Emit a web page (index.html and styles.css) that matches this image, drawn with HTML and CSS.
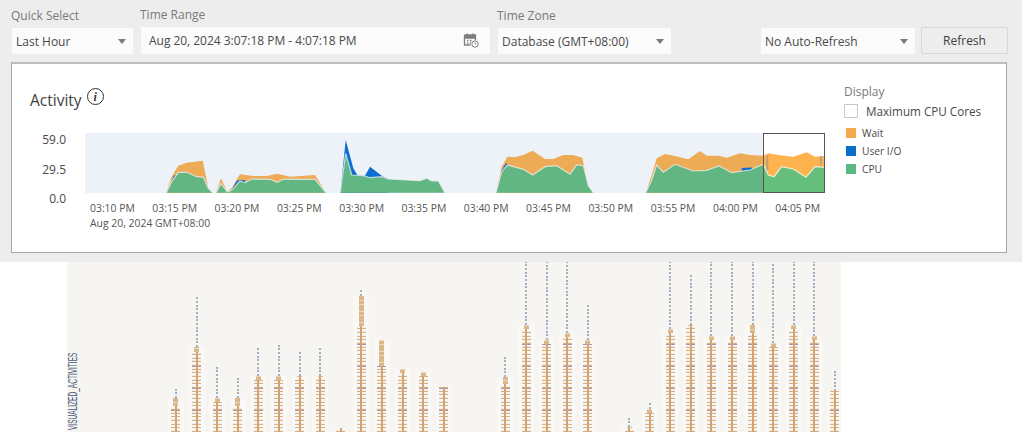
FILE: index.html
```html
<!DOCTYPE html>
<html lang="en">
<head>
<meta charset="utf-8">
<title>Activity</title>
<link rel="stylesheet" href="styles.css">
</head>
<body>
<div class="top">
<header class="toolbar">
  <div class="field f-quick"><label>Quick Select</label><div class="select">Last Hour<i class="caret"></i></div></div>
  <div class="field f-range"><label>Time Range</label><div class="select range">Aug 20, 2024 3:07:18 PM - 4:07:18 PM
    <svg class="cal" viewBox="0 0 16 16" width="16" height="16"><path d="M1.500 3h11v5M1.500 3v10h6M1.500 6h11M4 1.500v3M10 1.500v3M4 8.500h1.500M7 8.500h1.500M4 11h1.500M7 11h1" fill="none" stroke="#7d7d7d" stroke-width="1.300"/><path d="M1.500 3h11v3h-11z" fill="#7d7d7d"/><circle cx="12" cy="12" r="3.200" fill="#fff" stroke="#7d7d7d"/><path d="M12 10.200V12h1.500" fill="none" stroke="#7d7d7d" stroke-width=".8"/></svg>
  </div></div>
  <div class="field f-zone"><label>Time Zone</label><div class="select">Database (GMT+08:00)<i class="caret"></i></div></div>
  <div class="field f-auto"><div class="select">No Auto-Refresh<i class="caret"></i></div></div>
  <button class="refresh" type="button">Refresh</button>
</header>

<section class="card">
  <div class="chart">
    <h2 class="title">Activity <span class="info">i</span></h2>
    <div class="chart-row">
      <div class="y-axis"><span>59.0</span><span>29.5</span><span>0.0</span></div>
      <div class="plot-col">
        <svg class="plot" viewBox="85 133 740 60" width="740" height="60">
          <defs>
            <path id="orange" d="M166.300 192.700L171.700 176.700L178.300 165.700L186.700 162.700L202.700 160.700L208.300 188L212.700 192.700M216 192.700L221 178.300L227.300 191.700L231.700 188L240 174.300L253.300 176L266.700 176L277.300 173.700L290 176.700L315 175L326 192.700M496 192.700L501.700 166.700L507.300 156.700L515 157.300L523.300 155L532.700 150.700L545 159L553.300 159L563.300 155L573.300 155L582.300 157.700L588.300 185.700L593.300 192.700M645.700 192.700L651.700 175L656.700 158.300L665 154L675 156L688.300 159.300L700 151L706.700 155.700L718.300 155.700L726.700 157.700L740 153.300L750 155L763.300 155.700L768.300 153.300L778.300 155L793.300 156.700L806.700 152.300L815 156.700L825 156L825 192.700"/>
            <path id="blue" d="M340.300 192.700L345.700 140L353.300 168.300L357.300 175L365 175.700L370 166.700L381.700 175.700L388.300 179L388.300 192.700M170.500 184L174 175.500L176 175L172 181M231 191L237 180.500L245 180L245 184L240 182M501 171.500L506 163L508 165L502 172.500M741.700 168L752 167.500L752.500 170L741.700 171"/>
            <path id="green" d="M166.300 192.700L171.700 181.700L178.300 172.300L186.700 172.300L196.700 176.700L203.300 177.300L208.300 188.300L212.700 192.700M216 192.700L221 183.700L227.300 191.700L231.700 190.300L240 181L245 182.700L251.700 179L270 179.300L277.300 182.300L283.300 179.300L315 179.300L326 192.700M340.300 192.700L345.700 153.300L351.700 175L363.300 175.700L370 177.700L381.700 176.700L388.300 179L420 180.700L426.700 178.300L431.700 181L438.300 181L445 192.700M496 192.700L501.700 171.700L507.300 165L523.300 169.300L532.700 175L545 166.700L556.700 165.700L570 174.300L576.700 165L583.300 165.700L588.300 185.700L593.300 192.700M645.700 192.700L651.700 180L656.700 165L663.300 172.300L675 164.300L693.300 171L706.700 170.300L719 166L731.700 172.700L750 170L763.300 164.300L768.300 175L774 176.700L781.700 166.700L793.300 169L806 177.300L815 166.700L825 167.300L825 192.700"/>
          </defs>
          <rect class="plot-bg" x="85" y="133" width="740" height="60"/>
          <use href="#orange" class="s-orange"/>
          <use href="#blue" class="s-blue"/>
          <use href="#green" class="s-green"/>
          <path class="handle" d="M767.300 155.700V170M821 156V165"/>
          <rect class="dim" x="85" y="133" width="678.500" height="60"/>
          <rect class="selection" x="763.500" y="133.500" width="61" height="59"/>
        </svg>
        <div class="x-axis">
          <span>03:10 PM</span><span>03:15 PM</span><span>03:20 PM</span><span>03:25 PM</span><span>03:30 PM</span><span>03:35 PM</span><span>03:40 PM</span><span>03:45 PM</span><span>03:50 PM</span><span>03:55 PM</span><span>04:00 PM</span><span>04:05 PM</span>
        </div>
        <div class="x-date">Aug 20, 2024 GMT+08:00</div>
      </div>
    </div>
  </div>
  <aside class="legend">
    <div class="legend-title">Display</div>
    <div class="check"><i class="box"></i>Maximum CPU Cores</div>
    <ul class="keys">
      <li><i class="swatch wait"></i>Wait</li>
      <li><i class="swatch io"></i>User I/O</li>
      <li><i class="swatch cpu"></i>CPU</li>
    </ul>
  </aside>
</section>
</div>

<section class="activities">
  <div class="axis-name">VISUALIZED_ACTIVITIES</div>
  <div class="columns">
    <div class="col"><i class="dots" style="height:10px"></i><div class="stack"><i class="beads" style="height:8px"></i><i class="ticks" style="height:26px"></i></div></div>
    <div class="col"><i class="dots" style="height:50px"></i><div class="stack"><i class="beads" style="height:5px"></i><i class="ticks" style="height:80px"></i></div></div>
    <div class="col"><i class="dots" style="height:31px"></i><div class="stack"><i class="beads" style="height:4px"></i><i class="ticks" style="height:30px"></i></div></div>
    <div class="col"><i class="dots" style="height:21px"></i><div class="stack"><i class="beads" style="height:8px"></i><i class="ticks" style="height:26px"></i></div></div>
    <div class="col"><i class="dots" style="height:28px"></i><div class="stack"><i class="beads" style="height:4px"></i><i class="ticks" style="height:52px"></i></div></div>
    <div class="col"><i class="dots" style="height:32px"></i><div class="stack"><i class="beads" style="height:4px"></i><i class="ticks" style="height:52px"></i></div></div>
    <div class="col"><i class="dots" style="height:24px"></i><div class="stack"><i class="beads" style="height:1px"></i><i class="ticks" style="height:55px"></i></div></div>
    <div class="col"><i class="dots" style="height:28px"></i><div class="stack"><i class="beads" style="height:1px"></i><i class="ticks" style="height:55px"></i></div></div>
    <div class="col"><div class="stack"><i class="ticks" style="height:4px"></i></div></div>
    <div class="col"><i class="dots" style="height:7px"></i><div class="stack"><i class="beads" style="height:30px"></i><i class="ticks" style="height:106px"></i></div></div>
    <div class="col"><div class="stack"><i class="beads" style="height:26px"></i><i class="ticks" style="height:66px"></i></div></div>
    <div class="col"><div class="stack"><i class="beads" style="height:4px"></i><i class="ticks" style="height:59px"></i></div></div>
    <div class="col"><div class="stack"><i class="beads" style="height:4px"></i><i class="ticks" style="height:56px"></i></div></div>
    <div class="col"><div class="stack"><i class="ticks" style="height:45px"></i></div></div>
    <div class="col"></div>
    <div class="col"></div>
    <div class="col"><i class="dots" style="height:22px"></i><div class="stack"><i class="beads" style="height:7px"></i><i class="ticks" style="height:48px"></i></div></div>
    <div class="col"><i class="dots" style="height:63px"></i><div class="stack"><i class="beads" style="height:4px"></i><i class="ticks" style="height:103px"></i></div></div>
    <div class="col"><i class="dots" style="height:78px"></i><div class="stack"><i class="beads" style="height:4px"></i><i class="ticks" style="height:88px"></i></div></div>
    <div class="col"><i class="dots" style="height:71px"></i><div class="stack"><i class="beads" style="height:4px"></i><i class="ticks" style="height:95px"></i></div></div>
    <div class="col"><i class="dots" style="height:36px"></i><div class="stack"><i class="beads" style="height:4px"></i><i class="ticks" style="height:88px"></i></div></div>
    <div class="col"></div>
    <div class="col"><i class="dots" style="height:10px"></i><div class="stack"><i class="beads" style="height:1px"></i><i class="ticks" style="height:4px"></i></div></div>
    <div class="col"><i class="dots" style="height:7px"></i><div class="stack"><i class="beads" style="height:4px"></i><i class="ticks" style="height:19px"></i></div></div>
    <div class="col"><i class="dots" style="height:67px"></i><div class="stack"><i class="beads" style="height:4px"></i><i class="ticks" style="height:99px"></i></div></div>
    <div class="col"><i class="dots" style="height:51px"></i><div class="stack"><i class="beads" style="height:1px"></i><i class="ticks" style="height:106px"></i></div></div>
    <div class="col"><i class="dots" style="height:74px"></i><div class="stack"><i class="beads" style="height:4px"></i><i class="ticks" style="height:92px"></i></div></div>
    <div class="col"><i class="dots" style="height:74px"></i><div class="stack"><i class="beads" style="height:4px"></i><i class="ticks" style="height:92px"></i></div></div>
    <div class="col"><i class="dots" style="height:63px"></i><div class="stack"><i class="beads" style="height:8px"></i><i class="ticks" style="height:99px"></i></div></div>
    <div class="col"><i class="dots" style="height:81px"></i><div class="stack"><i class="beads" style="height:4px"></i><i class="ticks" style="height:85px"></i></div></div>
    <div class="col"><i class="dots" style="height:63px"></i><div class="stack"><i class="beads" style="height:4px"></i><i class="ticks" style="height:103px"></i></div></div>
    <div class="col"><i class="dots" style="height:74px"></i><div class="stack"><i class="beads" style="height:4px"></i><i class="ticks" style="height:92px"></i></div></div>
    <div class="col"><i class="dots" style="height:21px"></i><div class="stack"><i class="ticks" style="height:41px"></i></div></div>
  </div>
</section>
</body>
</html>
```

FILE: styles.css
```css
* { box-sizing: border-box; }
html, body { margin: 0; height: 432px; overflow: hidden; background: #fff; }
body { font-family: "Open Sans", "Noto Sans", sans-serif; font-size: 12px; color: #4a4a4a; }

.top { height: 262px; background: #ededed; }
.toolbar { display: flex; align-items: flex-end; height: 62px; padding: 0 14px 8px 12px; }
.field { display: flex; flex-direction: column; margin-right: 8px; }
.field label { font-size: 12px; line-height: 18px; color: #7a7a7a; margin-left: -1px; height: 21px; }
.f-quick { width: 121px; }
.f-range { width: 349px; }
.f-zone { width: 173px; margin-right: 0; }
.f-auto { width: 154px; margin-left: 90px; margin-right: 6px; }
.select { position: relative; display: flex; align-items: center; height: 26px; padding-left: 4px; background: #fbfbfb; font-size: 12px; color: #4a4a4a; }
.range { padding-left: 8px; justify-content: space-between; padding-right: 11px; height: 27px; letter-spacing: -.03px; }
.caret { position: absolute; right: 7px; top: 11px; width: 0; height: 0; border-left: 4px solid transparent; border-right: 4px solid transparent; border-top: 5px solid #7a7a7a; }
.cal { display: block; margin-top: -2px; }
.refresh { width: 87px; height: 27px; border: 1px solid #d6d6d6; border-radius: 2px; background: #ededed; font: inherit; color: #3d3d3d; padding: 0; }

.card { display: flex; width: 996px; height: 191px; margin-left: 11px; background: #fff; border: 1px solid #a8a8a8; border-top: 2px solid #bdbdbd; padding: 20px 0 0 18px; background-clip: padding-box; }
.chart { width: 795px; margin-right: 19px; }
.title { display: flex; align-items: center; height: 24px; margin: 4px 0 21px; font-weight: 400; font-size: 15.500px; color: #404040; }
.info { display: inline-flex; align-items: center; justify-content: center; width: 17px; height: 17px; margin: -7px 0 0 5px; border: 1.300px solid #333; border-radius: 50%; font: italic 700 12px/1 "Liberation Serif", serif; color: #333; }
.chart-row { display: flex; }
.y-axis { display: flex; flex-direction: column; justify-content: space-between; align-items: flex-end; width: 36px; height: 73px; margin-right: 19px; line-height: 14px; font-size: 12px; color: #4a4a4a; }
.plot-col { width: 740px; }
.plot { display: block; }
.plot-bg { fill: #fff; }
.s-orange { fill: #ffb34e; }
.s-blue { fill: #0a6fd4; }
.s-green { fill: #67bf7e; stroke: #fff; stroke-opacity: .75; stroke-width: 1.200; }
.handle { fill: none; stroke: #9a9a9a; stroke-opacity: .7; stroke-width: 2; }
.dim { fill: #2d5fae; fill-opacity: .085; }
.selection { fill: none; stroke: #555; stroke-width: 1; }
.x-axis { display: flex; margin: 7px 0 0 5px; white-space: nowrap; line-height: 16px; font-size: 10.400px; color: #555; }
.x-axis span { flex: none; width: 62.300px; }
.x-date { margin-left: 5px; line-height: 14px; font-size: 10.400px; color: #555; }

.legend { width: 150px; }
.legend-title { line-height: 15px; font-size: 12px; color: #7a7a7a; }
.check { display: flex; align-items: center; height: 14px; margin-top: 5px; font-size: 11.700px; color: #4a4a4a; white-space: nowrap; }
.box { width: 14px; height: 14px; margin-right: 8px; border: 1px solid #c8c8c8; background: #fff; }
.keys { list-style: none; margin: 6px 0 0; padding: 0; }
.keys li { display: flex; align-items: center; height: 18px; font-size: 10.200px; color: #4a4a4a; }
.swatch { width: 10px; height: 10px; margin: 0 6px 0 2px; }
.wait { background: #f4aa4b; }
.io { background: #0a6fc8; }
.cpu { background: #5cb882; }

.activities { position: relative; width: 774px; height: 170px; margin: 0 0 0 67px; overflow: hidden; background: #f7f5f2; }
.axis-name { position: absolute; left: 11px; bottom: 2px; transform-origin: left bottom; transform: rotate(-90deg) scaleX(.545); white-space: nowrap; font: 12px/10px "Liberation Sans", sans-serif; color: #46587c; }
.columns { display: flex; align-items: flex-end; height: 100%; padding-left: 98.700px; }
.col { display: flex; flex: none; flex-direction: column; align-items: center; width: 20.600px; }
.dots { display: block; width: 2px; background: repeating-linear-gradient(to top, #a3afc0 0 2px, transparent 2px 3.670px); }
.stack { display: flex; flex-direction: column; align-items: center; width: 16px; background: #faf8f5; }
.beads { display: block; width: 5px; background: repeating-linear-gradient(to top, #dcb78c 0 3px, #ead6bf 3px 3.670px); }
.ticks { display: block; width: 9px; background:
  linear-gradient(#d3a470, #d3a470) center / 2px 100% no-repeat,
  repeating-linear-gradient(to top, transparent 0 21px, rgba(150, 110, 150, .75) 21px 22px),
  repeating-linear-gradient(to top, rgba(208, 158, 104, .8) 0 1px, rgba(226, 222, 222, .45) 1px 1.800px, transparent 1.800px 3.670px);
}
```
